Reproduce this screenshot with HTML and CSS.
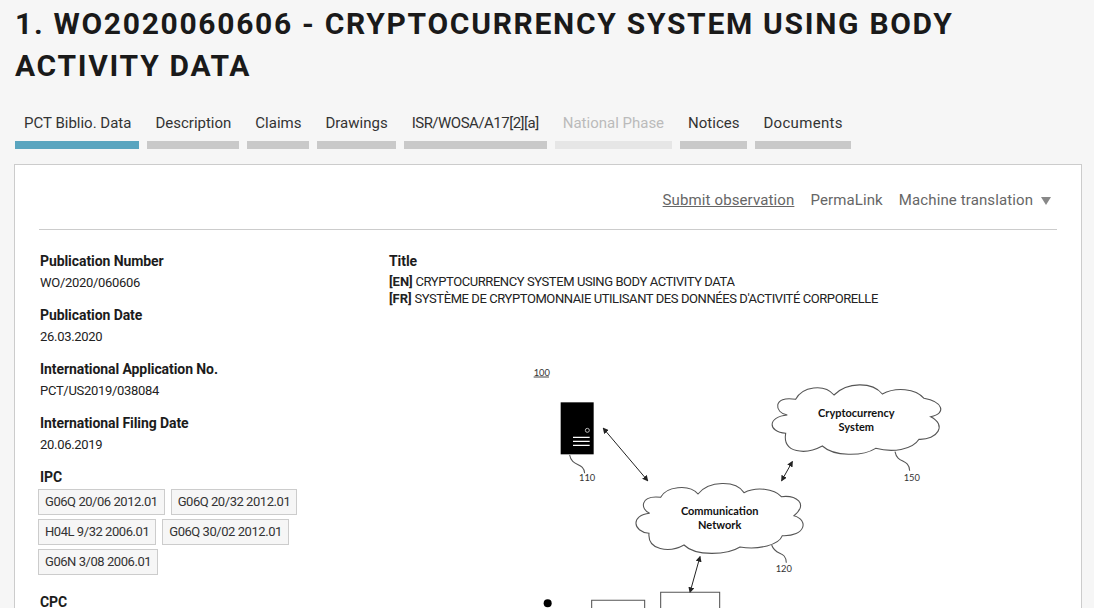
FILE: index.html
```html
<!DOCTYPE html>
<html lang="en">
<head>
  <meta charset="UTF-8" />
  <title>WO2020060606 - Cryptocurrency system using body activity data</title>
  <link rel="stylesheet" href="styles.css">
</head>
<body>
  <h1 class="title">1. WO2020060606 - CRYPTOCURRENCY SYSTEM USING BODY ACTIVITY DATA</h1>

  <div class="tabs">
    <a class="tab active">PCT Biblio. Data</a>
    <a class="tab">Description</a>
    <a class="tab">Claims</a>
    <a class="tab">Drawings</a>
    <a class="tab tight">ISR/WOSA/A17[2][a]</a>
    <a class="tab disabled">National Phase</a>
    <a class="tab">Notices</a>
    <a class="tab wide">Documents</a>
  </div>

  <div class="card">
    <div class="actions">
      <a class="action underline">Submit observation</a>
      <a class="action">PermaLink</a>
      <a class="action">Machine translation <span class="caret"></span></a>
    </div>

    <div class="columns">
      <div class="biblio">
        <div class="field">
          <div class="label">Publication Number</div>
          <div class="value">WO/2020/060606</div>
        </div>
        <div class="field">
          <div class="label">Publication Date</div>
          <div class="value">26.03.2020</div>
        </div>
        <div class="field">
          <div class="label">International Application No.</div>
          <div class="value">PCT/US2019/038084</div>
        </div>
        <div class="field">
          <div class="label">International Filing Date</div>
          <div class="value">20.06.2019</div>
        </div>
        <div class="field">
          <div class="label">IPC</div>
          <div class="chips">
            <span class="chip">G06Q 20/06 2012.01</span>
            <span class="chip">G06Q 20/32 2012.01</span>
            <span class="chip">H04L 9/32 2006.01</span>
            <span class="chip">G06Q 30/02 2012.01</span>
            <span class="chip">G06N 3/08 2006.01</span>
          </div>
        </div>
        <div class="field cpc">
          <div class="label">CPC</div>
        </div>
      </div>

      <div class="abstract">
        <div class="label">Title</div>
        <div class="value"><b>[EN]</b> CRYPTOCURRENCY SYSTEM USING BODY ACTIVITY DATA</div>
        <div class="value"><b>[FR]</b> SYSTÈME DE CRYPTOMONNAIE UTILISANT DES DONNÉES D'ACTIVITÉ CORPORELLE</div>

        <svg class="drawing" viewBox="0 0 1320 744" width="440" height="248">
          <defs>
            <marker id="head" markerWidth="6" markerHeight="6" refX="5" refY="3" orient="auto-start-reverse">
              <path d="M0 0L6 3L0 6z" fill="#222"/>
            </marker>
          </defs>

          <text class="ref" x="44" y="47">100</text>
          <path class="rule" d="M44 51H90"/>

          <!-- server -->
          <rect x="125" y="127" width="99" height="156" fill="#000"/>
          <circle cx="205" cy="211" r="6" fill="none" stroke="#bbb" stroke-width="3"/>
          <path d="M162 232H212M162 244H212M162 256H212" stroke="#fff" stroke-width="4"/>
          <path class="line" d="M152 285C158 322 195 305 197 340"/>
          <text class="ref" x="180" y="362">110</text>

          <!-- arrows -->
          <path class="arrow" d="M253 205L386 362"/>
          <path class="arrow" d="M820 305L788 362"/>
          <path class="arrow" d="M543 590L513 697"/>

          <!-- communication network -->
          <path class="line" fill="#fff" d="M392 460C365 450 360 405 425 412C440 380 510 370 537 402C570 362 650 360 675 398C710 380 765 385 787 410C830 405 870 430 825 467C870 480 860 530 790 527C780 555 720 570 663 561C625 585 530 590 495 555C450 580 385 570 390 520C340 515 335 465 392 460z"/>
          <path class="line" d="M758 555C770 590 800 570 802 608"/>
          <text class="cloud" x="602" y="464">Communication</text>
          <text class="cloud" x="602" y="506">Network</text>
          <text class="ref" x="770" y="637">120</text>

          <!-- cryptocurrency system -->
          <path class="line" fill="#fff" d="M805 165C765 160 760 105 830 118C850 80 915 70 945 105C985 65 1060 65 1090 102C1130 80 1190 85 1215 115C1270 125 1285 160 1235 170C1285 195 1255 240 1200 238C1180 270 1120 278 1070 265C1030 290 945 290 910 258C860 285 790 280 800 220C745 215 745 170 805 165z"/>
          <path class="line" d="M1128 275C1135 312 1170 295 1172 332"/>
          <text class="cloud" x="1012" y="170">Cryptocurrency</text>
          <text class="cloud" x="1012" y="212">System</text>
          <text class="ref" x="1154" y="362">150</text>

          <!-- bottom devices, cut off by the window -->
          <circle cx="86" cy="730" r="12" fill="#000"/>
          <path class="line" d="M218 744V721H377V744"/>
          <path class="line" d="M425 744V697H602V744"/>
        </svg>
      </div>
    </div>
  </div>
</body>
</html>
```

FILE: styles.css
```css
* { margin:0; padding:0; box-sizing:border-box; }
html, body { height:100%; overflow:hidden; }
body {
  background:#f6f6f6; color:#1c1c1c;
  font-family:Roboto, "Liberation Sans", sans-serif;
  padding:3px 12px 0 14px;
}

.title {
  font-size:30px; line-height:42px; font-weight:700;
  letter-spacing:1.7px; padding-left:1px; color:#1a1a1a;
}

.tabs { display:flex; gap:8px; margin-top:24px; padding-left:1px; }
.tab {
  display:block; padding:0 8px; height:38px;
  font-size:15px; line-height:24px; color:#333;
  border-bottom:8px solid #c9c9c9;
}
.tab.active { padding-left:9px; border-color:#5aa5bf; }
.tab.disabled { color:#bbb; border-color:#e6e6e6; }
.tab.tight { letter-spacing:-.5px; }
.tab.wide { letter-spacing:.3px; }

.card {
  margin-top:15px; background:#fff; border:1px solid #ccc;
  padding:0 24px; height:700px;
}

.actions {
  display:flex; justify-content:flex-end; gap:16px;
  height:65px; padding:24px 6px 0 0;
  border-bottom:1px solid #ccc;
  font-size:15px; line-height:22px; color:#666;
  letter-spacing:.12px;
}
.action.underline { text-decoration:underline; }
.caret {
  display:inline-block; margin-left:4px;
  border-left:5px solid transparent; border-right:5px solid transparent;
  border-top:8px solid #888;
}

.columns { display:flex; padding-top:21px; }
.biblio { width:350px; padding-left:1px; }
.abstract { flex:1; min-width:0; }

.field { margin-bottom:12px; }
.field.cpc { margin-top:17px; }
.label { font-size:14px; line-height:21px; font-weight:700; letter-spacing:-.08px; }
.value { font-size:13px; line-height:17px; color:#222; letter-spacing:-.42px; }
.value b { letter-spacing:0; }
.field .value { line-height:21px; letter-spacing:-.3px; }
.abstract .label { margin-bottom:1px; }

.chips { display:flex; flex-wrap:wrap; gap:4px 6px; margin:1px 40px 0 -2px; }
.chip {
  height:26px; padding:0 6px; line-height:24px;
  font-size:13px; letter-spacing:-.45px; color:#333;
  background:#f6f6f6; border:1px solid #ccc;
}

.drawing { display:block; margin:53px 0 0 130px; }
.drawing .line { stroke:#555; stroke-width:3.2; }
.drawing path.line:not([fill]) { fill:none; }
.drawing .rule { stroke:#444; stroke-width:3; }
.drawing .arrow { stroke:#222; stroke-width:3; marker-start:url(#head); marker-end:url(#head); }
.drawing .ref { font-family:Lato, sans-serif; font-size:28px; fill:#333; }
.drawing .cloud { font-family:Lato, sans-serif; font-size:33px; font-weight:700; fill:#111; text-anchor:middle; }
```
